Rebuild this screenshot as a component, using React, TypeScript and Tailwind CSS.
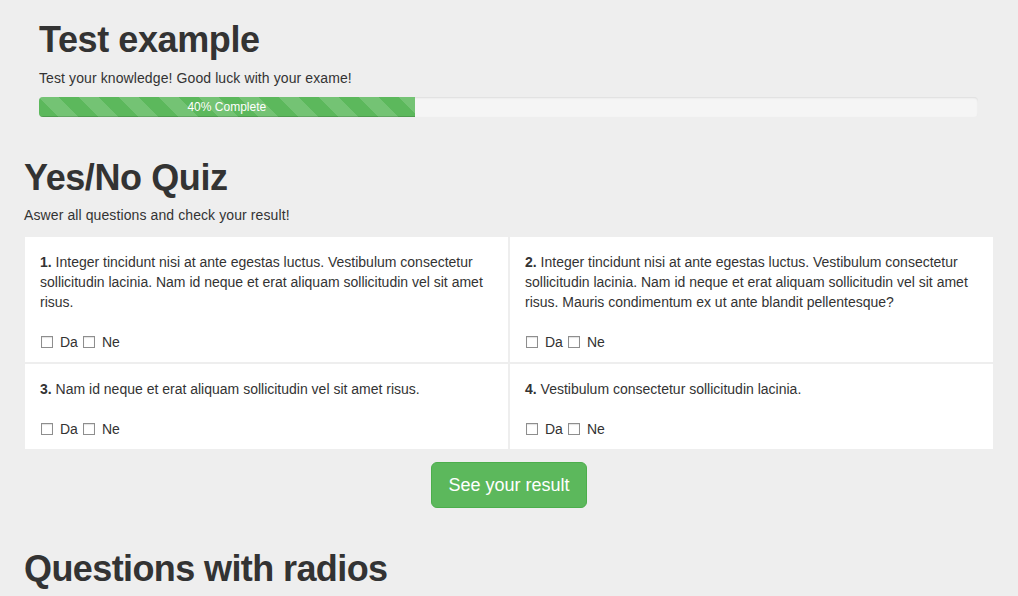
import React, { useState } from 'react';

const questions = [
  {
    n: 1,
    text: 'Integer tincidunt nisi at ante egestas luctus. Vestibulum consectetur sollicitudin lacinia. Nam id neque et erat aliquam sollicitudin vel sit amet risus.',
  },
  {
    n: 2,
    text: 'Integer tincidunt nisi at ante egestas luctus. Vestibulum consectetur sollicitudin lacinia. Nam id neque et erat aliquam sollicitudin vel sit amet risus. Mauris condimentum ex ut ante blandit pellentesque?',
  },
  { n: 3, text: 'Nam id neque et erat aliquam sollicitudin vel sit amet risus.' },
  { n: 4, text: 'Vestibulum consectetur sollicitudin lacinia.' },
];

const boxClass =
  'appearance-none m-0 w-[12px] h-[12px] shrink-0 border border-[#8e8e8e] bg-white shadow-[inset_0_1px_1px_rgba(0,0,0,0.12)] checked:bg-[#5cb85c]';

export default function App() {
  const [answers, setAnswers] = useState<Record<number, { da: boolean; ne: boolean }>>({});

  const toggle = (n: number, key: 'da' | 'ne') => {
    setAnswers(prev => {
      const cur = prev[n] || { da: false, ne: false };
      return { ...prev, [n]: { ...cur, [key]: !cur[key] } };
    });
  };

  return (
    <div
      className="min-h-[596px] bg-[#eeeeee] text-[#333333] pt-[20px] pl-[25px] pr-[25px] text-[14px] leading-5"
      style={{ fontFamily: '"Liberation Sans", Arial, sans-serif' }}
    >
      {/* Header */}
      <div className="pl-[14px] pr-[15px]">
        <h1 className="text-[36px] leading-10 font-bold tracking-[-0.4px]">Test example</h1>
        <p className="mt-[8px] tracking-[0.1px]">Test your knowledge! Good luck with your exame!</p>
        <div className="mt-[9px] h-5 rounded-[4px] bg-[#f5f5f5] shadow-[inset_0_1px_2px_rgba(0,0,0,0.1)] overflow-hidden">
          <div className="h-5 w-[40%] bg-[#5cb85c] bg-[linear-gradient(45deg,rgba(255,255,255,.15)_25%,transparent_25%,transparent_50%,rgba(255,255,255,.15)_50%,rgba(255,255,255,.15)_75%,transparent_75%,transparent)] bg-[length:40px_40px] shadow-[inset_0_-1px_0_rgba(0,0,0,0.15)] text-center text-[12px] leading-5 text-white">
            40% Complete
          </div>
        </div>
      </div>

      {/* Yes/No quiz */}
      <h2 className="-ml-[1px] mt-[41px] text-[36px] leading-10 font-bold tracking-[-0.4px]">Yes/No Quiz</h2>
      <p className="-ml-[1px] mt-[7px] tracking-[0.1px]">Aswer all questions and check your result!</p>

      <div className="mt-[12px] grid grid-cols-2 gap-[2px]">
        {questions.map(q => (
          <div key={q.n} className="bg-white pt-[15px] pb-[10px] pl-[15px] pr-[14px]">
            <p className="mb-5">
              <b>{q.n}.</b> {q.text}
            </p>
            <div className="flex items-center h-5">
              <label className="flex items-center">
                <input
                  type="checkbox"
                  className={'ml-[1px] ' + boxClass}
                  checked={!!answers[q.n]?.da}
                  onChange={() => toggle(q.n, 'da')}
                />
                <span className="ml-[7px]">Da</span>
              </label>
              <label className="flex items-center">
                <input
                  type="checkbox"
                  className={'ml-[5px] ' + boxClass}
                  checked={!!answers[q.n]?.ne}
                  onChange={() => toggle(q.n, 'ne')}
                />
                <span className="ml-[7px]">Ne</span>
              </label>
            </div>
          </div>
        ))}
      </div>

      <div className="mt-[13px] flex justify-center">
        <button className="px-4 py-[10px] text-[18px] leading-6 rounded-[6px] border border-[#4cae4c] bg-[#5cb85c] text-white">
          See your result
        </button>
      </div>

      <h2 className="-ml-[1px] mt-[41px] text-[36px] leading-10 font-bold tracking-[-0.6px]">Questions with radios</h2>
    </div>
  );
}
